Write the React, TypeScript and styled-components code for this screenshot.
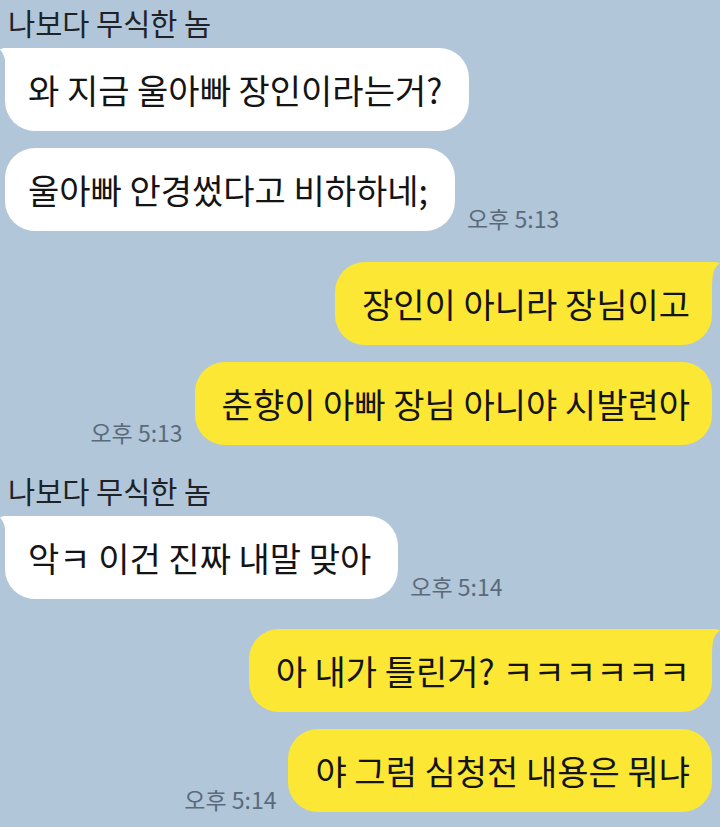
import React from "react";
import styled, { createGlobalStyle } from "styled-components";

const GlobalStyle = createGlobalStyle`
  html, body {
    margin: 0;
    padding: 0;
    background: #b1c6d9;
  }
  body {
    font-family: "Noto Sans CJK KR", "Noto Sans", sans-serif;
  }
`;

const Page = styled.div`
  width: 720px;
  height: 827px;
  box-sizing: border-box;
  padding: 5px 8px 0 5px;
  background: #b1c6d9;
  display: flex;
  flex-direction: column;
  overflow: hidden;
`;

const Name = styled.div<{ $gapTop: number }>`
  margin-top: ${(p) => p.$gapTop}px;
  margin-left: 3px;
  height: 34px;
  line-height: 34px;
  font-size: 29.5px;
  color: #1f2226;
  margin-bottom: 9px;
  white-space: nowrap;
`;

const Row = styled.div<{ $mine?: boolean; $gapTop: number }>`
  display: flex;
  flex-direction: row;
  align-items: flex-end;
  justify-content: ${(p) => (p.$mine ? "flex-end" : "flex-start")};
  gap: 12px;
  margin-top: ${(p) => p.$gapTop}px;
`;

const Bubble = styled.div<{ $mine?: boolean; $tail?: boolean }>`
  position: relative;
  height: 83px;
  box-sizing: border-box;
  display: flex;
  align-items: center;
  padding: ${(p) => (p.$mine ? "0 22px 0 27px" : "0 27px 0 23px")};
  border-radius: 30px;
  ${(p) =>
    p.$tail
      ? p.$mine
        ? "border-top-right-radius: 3px;"
        : "border-top-left-radius: 3px;"
      : ""}
  background: ${(p) => (p.$mine ? "#fce834" : "#ffffff")};
  color: #141414;
  font-size: 34px;
  white-space: nowrap;
`;

const Tail = styled.svg<{ $mine?: boolean }>`
  position: absolute;
  top: 0;
  width: 14px;
  height: 26px;
  ${(p) => (p.$mine ? "right: -8px;" : "left: -5px;")}
`;

const Time = styled.div`
  font-size: 23px;
  line-height: 26px;
  color: #5a6a7b;
  white-space: nowrap;
  padding-bottom: 0;
`;

type Msg = {
  text: string;
  mine?: boolean;
  tail?: boolean;
  time?: string;
  gap: number;
};

const BubbleTail: React.FC<{ mine?: boolean }> = ({ mine }) => (
  <Tail $mine={mine} viewBox="0 0 14 26" aria-hidden>
    {mine ? (
      <path d="M0 0 L8 0 Q10 0 14 1 Q8 6 7 12 Q6 18 6 26 L0 26 Z" fill="#fce834" />
    ) : (
      <path d="M14 0 L4 0 Q2 0 0 1.5 Q4 6 5 12 Q5 18 5 26 L14 26 Z" fill="#ffffff" />
    )}
  </Tail>
);

const Message: React.FC<{ m: Msg }> = ({ m }) => {
  const bubble = (
    <Bubble $mine={m.mine} $tail={m.tail}>
      {m.tail && <BubbleTail mine={m.mine} />}
      {m.text}
    </Bubble>
  );
  const time = m.time ? <Time>{m.time}</Time> : null;
  return (
    <Row $mine={m.mine} $gapTop={m.gap}>
      {m.mine ? (
        <>
          {time}
          {bubble}
        </>
      ) : (
        <>
          {bubble}
          {time}
        </>
      )}
    </Row>
  );
};

const group1: Msg[] = [
  { text: "와 지금 울아빠 장인이라는거?", tail: true, gap: 0 },
  { text: "울아빠 안경썼다고 비하하네;", time: "오후 5:13", gap: 17 },
  { text: "장인이 아니라 장님이고", mine: true, tail: true, gap: 31 },
  { text: "춘향이 아빠 장님 아니야 시발련아", mine: true, time: "오후 5:13", gap: 17 },
];

const group2: Msg[] = [
  { text: "악ㅋ 이건 진짜 내말 맞아", tail: true, time: "오후 5:14", gap: 0 },
  { text: "아 내가 틀린거? ㅋㅋㅋㅋㅋㅋ", mine: true, tail: true, gap: 30 },
  { text: "야 그럼 심청전 내용은 뭐냐", mine: true, time: "오후 5:14", gap: 17 },
];

export default function App() {
  return (
    <>
      <GlobalStyle />
      <Page>
        <Name $gapTop={0}>나보다 무식한 놈</Name>
        {group1.map((m, i) => (
          <Message key={"a" + i} m={m} />
        ))}
        <Name $gapTop={28}>나보다 무식한 놈</Name>
        {group2.map((m, i) => (
          <Message key={"b" + i} m={m} />
        ))}
      </Page>
    </>
  );
}
